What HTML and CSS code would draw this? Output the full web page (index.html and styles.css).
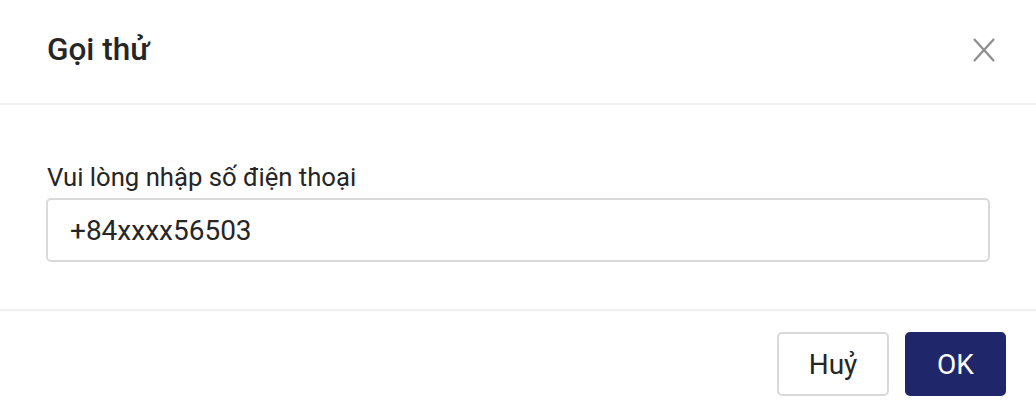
FILE: index.html
```html
<!DOCTYPE html>
<html lang="vi">
<head>
<meta charset="utf-8">
<link rel="stylesheet" href="styles.css">
</head>
<body>
<div class="dialog">
  <div class="header">
    <div class="title">Gọi thử</div>
    <button class="close" aria-label="Close">
      <svg width="24" height="24" viewBox="0 0 24 24"><path d="M2 1 L22 23 M22 1 L2 23" stroke="#8c8c8c" stroke-width="2.2" fill="none"/></svg>
    </button>
  </div>
  <div class="body">
    <label class="label">Vui lòng nhập số điện thoại</label>
    <div class="input">+84xxxx56503</div>
  </div>
  <div class="footer">
    <button class="btn btn-cancel">Huỷ</button>
    <button class="btn btn-ok">OK</button>
  </div>
</div>
</body>
</html>
```
FILE: styles.css
```css
* { box-sizing: border-box; }
html, body { margin: 0; padding: 0; background: #fff; }
body { font-family: Roboto, "Liberation Sans", sans-serif; color: #262626; }
.dialog { width: 1036px; height: 412px; display: flex; flex-direction: column; }
.header {
  height: 105px;
  border-bottom: 2px solid #f0f0f0;
  display: flex;
  align-items: center;
  justify-content: space-between;
  padding: 0 40px 4px 47px;
}
.title { font-size: 31.5px; font-weight: 500; color: #262626; line-height: 40px; }
.close { background: none; border: 0; padding: 0; width: 24px; height: 24px; display: flex; cursor: pointer; }
.body {
  height: 206px;
  border-bottom: 2px solid #f0f0f0;
  padding: 54px 46px 0 46px;
  display: flex;
  flex-direction: column;
}
.label { font-size: 25.7px; line-height: 37px; color: #262626; padding-left: 1px; margin-bottom: 2px; }
.input {
  height: 64px;
  border: 2px solid #d9d9d9;
  border-radius: 5px;
  font-size: 28px;
  padding: 0 22px;
  display: flex;
  align-items: center;
  color: #262626;
}
.footer {
  display: flex;
  justify-content: flex-end;
  gap: 16px;
  padding: 21px 30px 0 0;
}
.btn {
  height: 64px;
  font-family: Roboto, "Liberation Sans", sans-serif;
  font-size: 28px;
  border-radius: 5px;
  padding: 0;
  cursor: pointer;
}
.btn-cancel { width: 112px; background: #fff; border: 2px solid #d9d9d9; color: #262626; }
.btn-ok { width: 101px; background: #1f276a; border: 2px solid #1f276a; color: #fff; }
```
